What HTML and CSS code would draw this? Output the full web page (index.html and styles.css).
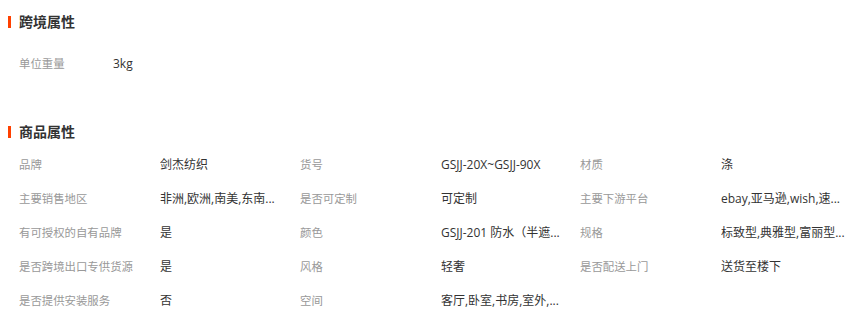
FILE: index.html
```html
<!DOCTYPE html>
<html lang="zh-CN">
<head>
<meta charset="utf-8">
<title>属性</title>
<link rel="stylesheet" href="styles.css">
</head>
<body>
<section class="block">
  <h2 class="title"><span class="bar"></span>跨境属性</h2>
  <div class="single">
    <span class="label">单位重量</span>
    <span class="value">3kg</span>
  </div>
</section>
<section class="block second">
  <h2 class="title"><span class="bar"></span>商品属性</h2>
  <div class="grid">
    <span class="label">品牌</span><span class="value">剑杰纺织</span>
    <span class="label">货号</span><span class="value">GSJJ-20X~GSJJ-90X</span>
    <span class="label">材质</span><span class="value">涤</span>

    <span class="label">主要销售地区</span><span class="value">非洲,欧洲,南美,东南...</span>
    <span class="label">是否可定制</span><span class="value">可定制</span>
    <span class="label">主要下游平台</span><span class="value">ebay,亚马逊,wish,速...</span>

    <span class="label">有可授权的自有品牌</span><span class="value">是</span>
    <span class="label">颜色</span><span class="value">GSJJ-201 防水（半遮...</span>
    <span class="label">规格</span><span class="value">标致型,典雅型,富丽型...</span>

    <span class="label">是否跨境出口专供货源</span><span class="value">是</span>
    <span class="label">风格</span><span class="value">轻奢</span>
    <span class="label">是否配送上门</span><span class="value">送货至楼下</span>

    <span class="label">是否提供安装服务</span><span class="value">否</span>
    <span class="label">空间</span><span class="value">客厅,卧室,书房,室外,...</span>
  </div>
</section>
</body>
</html>
```
FILE: styles.css
```css
html, body {
  margin: 0;
  padding: 0;
  background: #fff;
}
body {
  font-family: "Open Sans", "Noto Sans CJK SC", sans-serif;
  font-size: 12px;
  color: #333;
}
.block {
  padding-left: 8px;
}
.title {
  display: flex;
  align-items: center;
  margin: 14px 0 0;
  height: 16px;
  font-size: 14px;
  font-weight: bold;
  color: #333;
  line-height: 16px;
}
.bar {
  width: 3px;
  height: 12px;
  background: #ff4000;
  margin-right: 8px;
}
.single {
  display: flex;
  align-items: center;
  height: 34px;
  margin-top: 16px;
  padding-left: 11px;
}
.single .label {
  width: 94px;
}
.second {
  margin-top: 44px;
}
.grid {
  display: grid;
  grid-template-columns: 141px 140px 141px 139px 141px 1fr;
  grid-auto-rows: 34px;
  align-items: center;
  margin-top: 7px;
  padding-left: 11px;
}
.label {
  color: #999;
  font-size: 11.4px;
  white-space: nowrap;
}
.value {
  color: #333;
  white-space: nowrap;
  overflow: hidden;
}
```
